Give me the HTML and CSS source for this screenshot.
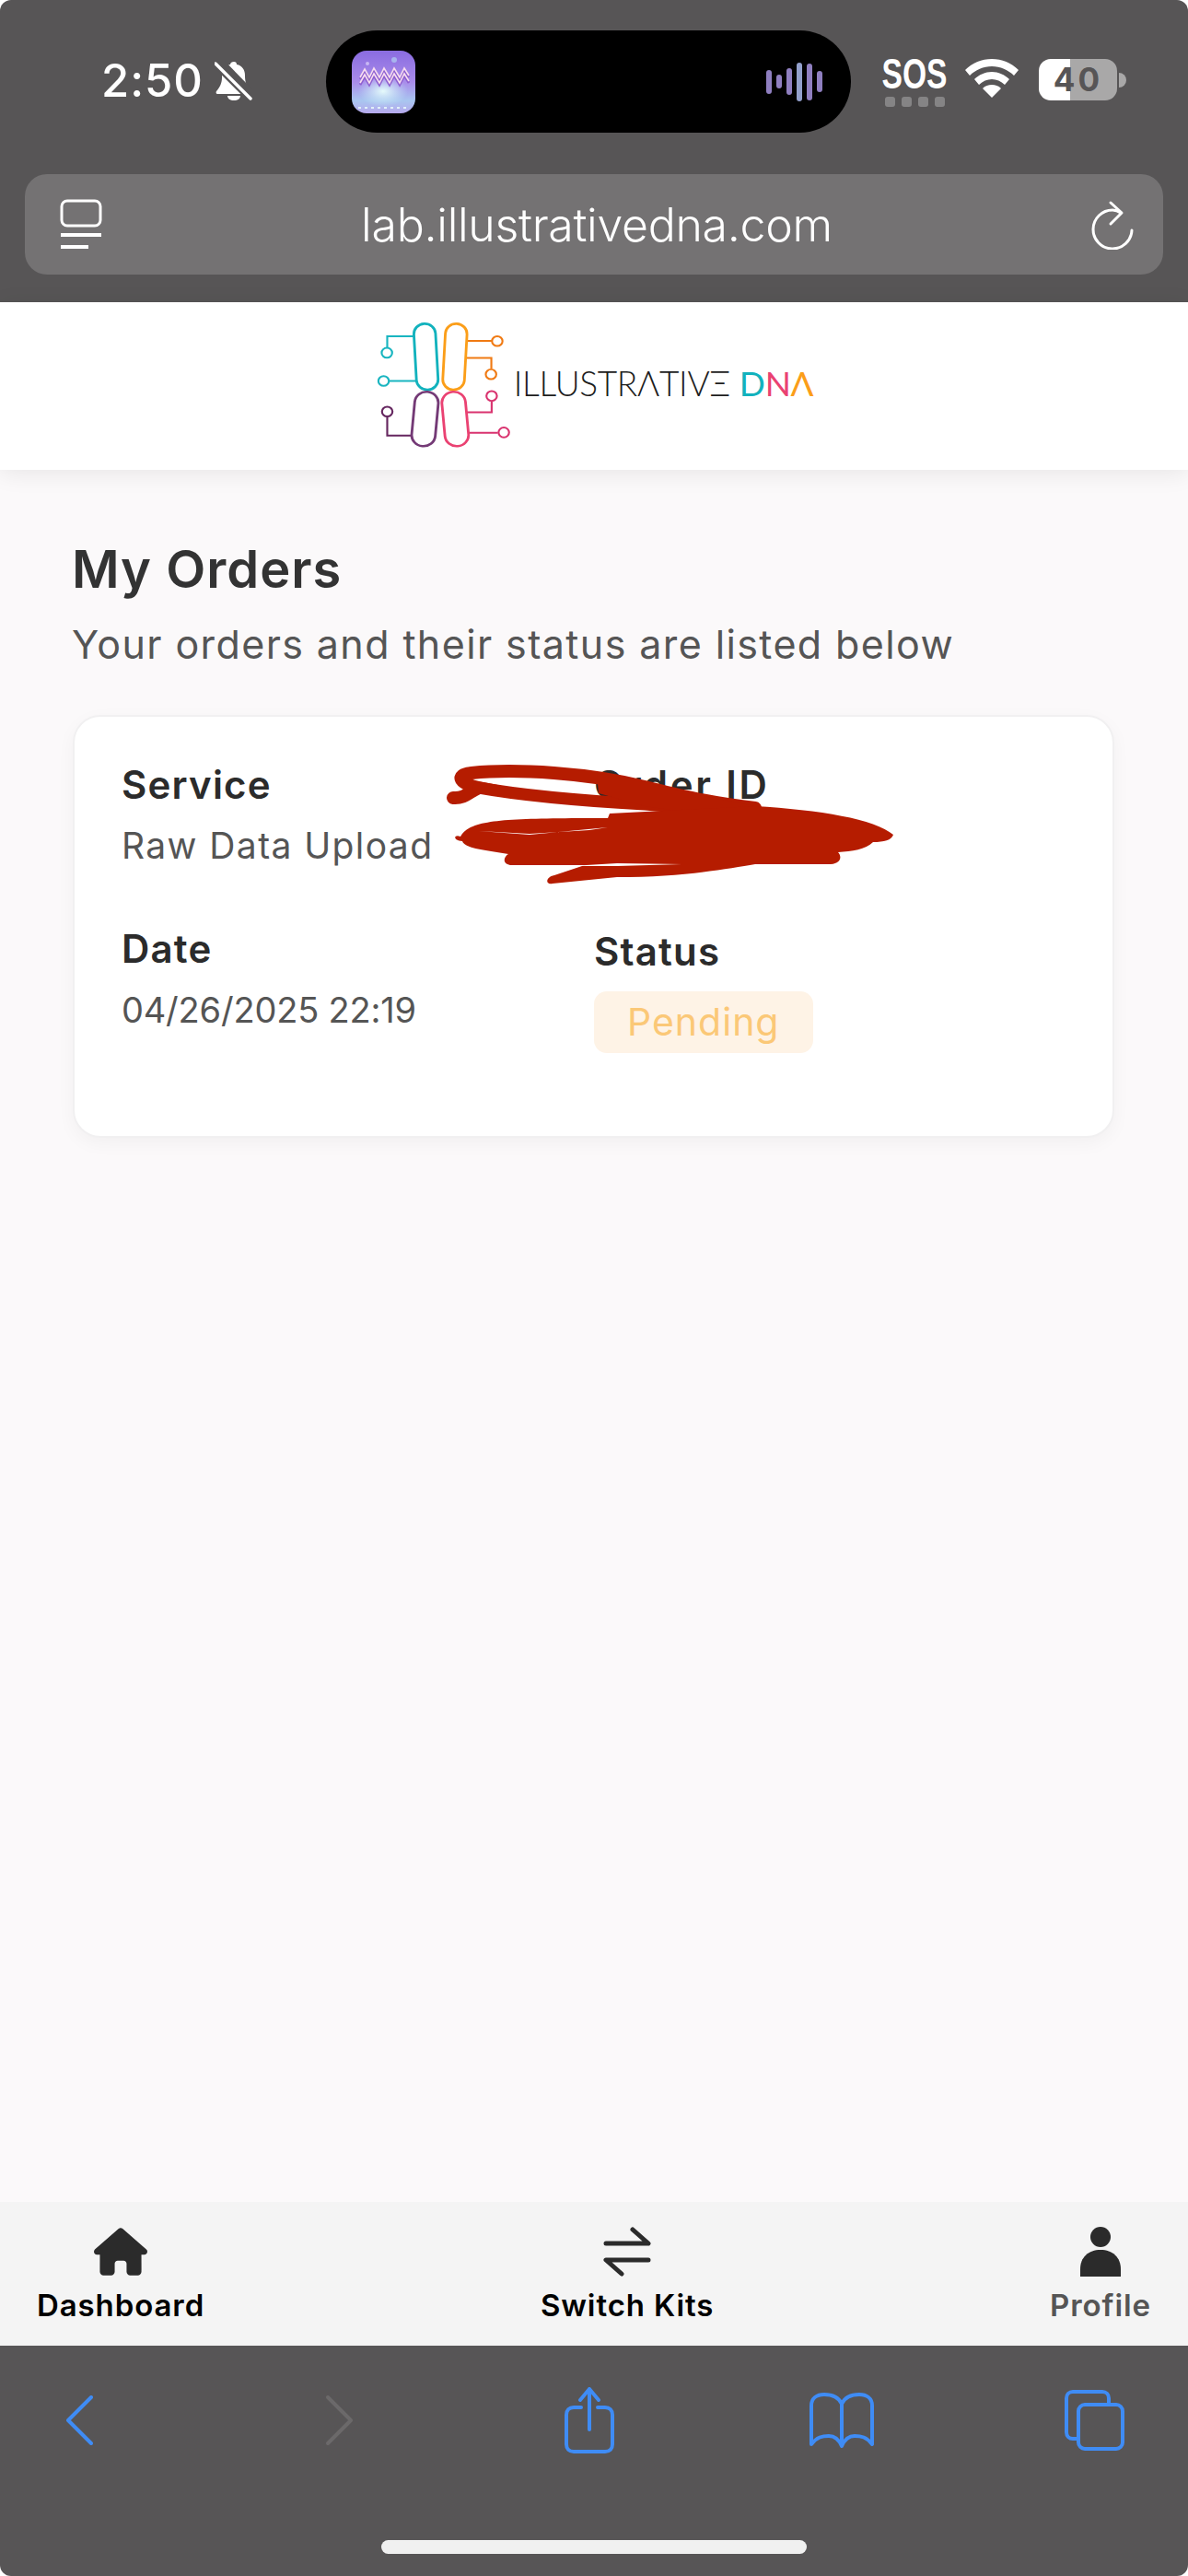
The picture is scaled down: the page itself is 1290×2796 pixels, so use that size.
FILE: index.html
```html
<!DOCTYPE html>
<html lang="en">
<head>
    <meta charset="UTF-8">
    <meta name="viewport" content="width=device-width, initial-scale=1.0">
    <title>My Orders</title>
    <link rel="stylesheet" href="styles.css">
</head>
<body>
<div class="phone">
    <div class="top-chrome">
        <div class="status-bar">
            <div class="status-left">
                <span class="time">2:50</span>
                <svg class="bell" viewBox="0 0 41 44">
                    <path d="M21 1c2 0 3 1 3 3 6 1 9 6 9 12 0 6 1 11 6 17 1 2 0 3-2 3H4c-2 0-3-1-2-3 4-5 6-9 6-15V16c0-6 4-11 9-12 0-2 2-3 4-3z" fill="#fff"/>
                    <path d="M14 38h14c0 3-3 5-7 5s-7-2-7-5z" fill="#fff"/>
                    <path d="M6 0l36 37" stroke="#575556" stroke-width="7"/>
                    <path d="M1 3l38 38" stroke="#575556" stroke-width="8"/>
                    <path d="M1 3l38 38" stroke="#fff" stroke-width="3.5" stroke-linecap="round"/>
                </svg>
            </div>
            <div class="island">
                <svg class="app-icon" viewBox="0 0 69 68">
                    <defs>
                        <linearGradient id="appGrad" x1="0" y1="0" x2="0" y2="1">
                            <stop offset="0" stop-color="#8a6ce0"/>
                            <stop offset="0.5" stop-color="#a98cea"/>
                            <stop offset="0.8" stop-color="#a9c6f0"/>
                            <stop offset="1" stop-color="#b6a8ec"/>
                        </linearGradient>
                        <radialGradient id="appGlow" cx="0.5" cy="0.5" r="0.5">
                            <stop offset="0" stop-color="#e6fbfb"/>
                            <stop offset="1" stop-color="#c8f0f8" stop-opacity="0"/>
                        </radialGradient>
                    </defs>
                    <rect width="69" height="68" rx="16" fill="url(#appGrad)"/>
                    <ellipse cx="34" cy="44" rx="27" ry="17" fill="url(#appGlow)"/>
                    <path d="M9 31l5-9 5 9 5-10 6 10 5-10 6 10 5-10 6 10 5-10 5 8M9 37l5-9 5 9 5-10 6 10 5-10 6 10 5-10 6 10 5-10 5 8" fill="none" stroke="#8d5fd0" stroke-width="2.6"/>
                    <path d="M9 29l5-9 5 9 5-10 6 10 5-10 6 10 5-10 6 10 5-10 5 8M9 35l5-9 5 9 5-10 6 10 5-10 6 10 5-10 6 10 5-10 5 8" fill="none" stroke="#f6dcf0" stroke-width="1.6"/>
                    <circle cx="46" cy="10" r="3" fill="#a8b4ee"/>
                    <circle cx="17" cy="14" r="2" fill="#c8b8f4"/>
                    <path d="M7 62h55" stroke="#e0f0f8" stroke-width="2" stroke-dasharray="3 4"/>
                </svg>
                <div class="sound-bars">
                    <span class="bar bar-1"></span>
                    <span class="bar bar-2"></span>
                    <span class="bar bar-3"></span>
                    <span class="bar bar-4"></span>
                    <span class="bar bar-5"></span>
                    <span class="bar bar-6"></span>
                </div>
            </div>
            <div class="status-right">
                <div class="sos">
                    <span class="sos-text">SOS</span>
                    <div class="sos-dots"><i></i><i></i><i></i><i></i></div>
                </div>
                <svg class="wifi" viewBox="0 0 58 42">
                    <path d="M29 0c11 0 21 4 29 12l-5 6c-6-6-15-10-24-10S11 12 5 18L0 12C8 4 18 0 29 0z" fill="#fff"/>
                    <path d="M29 14c7 0 14 3 19 8l-5 6c-4-4-9-6-14-6s-10 2-14 6l-5-6c5-5 12-8 19-8z" fill="#fff"/>
                    <path d="M29 28c4 0 7 1 10 4L29 42 19 32c3-3 6-4 10-4z" fill="#fff"/>
                </svg>
                <div class="battery">
                    <div class="battery-body"><span>40</span></div>
                    <div class="battery-nub"></div>
                </div>
            </div>
        </div>
        <div class="url-bar">
            <svg class="url-icon" viewBox="0 0 46 55">
                <rect x="2" y="2" width="42" height="27" rx="6" fill="none" stroke="#fff" stroke-width="3"/>
                <path d="M1 39h44M1 52h30" stroke="#fff" stroke-width="4"/>
            </svg>
            <span class="url-text">lab.illustrativedna.com</span>
            <svg class="url-icon" viewBox="16 11 46 55" fill="none" stroke="#fff" stroke-width="3" stroke-linecap="round" stroke-linejoin="round">
                <path d="M48 26C45 24 42 23 39 23A21 21 0 1 0 60 45"/>
                <path d="M37 15L49 26L37 38"/>
            </svg>
        </div>
    </div>

    <div class="header">
        <div class="logo">
            <svg class="logo-mark" viewBox="130 85 415 412" preserveAspectRatio="none" fill="none">
                <g stroke-width="6">
                    <path d="M245 133H165V170M255 279H172" stroke="#19b5c0"/>
                    <circle cx="164" cy="187" r="16" stroke="#19b5c0"/>
                    <circle cx="154" cy="279" r="16" stroke="#19b5c0"/>
                    <path d="M410 148H483M405 204H482V238" stroke="#f07a13"/>
                    <circle cx="500" cy="149" r="16" stroke="#f07a13"/>
                    <circle cx="481" cy="257" r="16" stroke="#f07a13"/>
                    <path d="M408 381H483V346M415 448H502" stroke="#d9336f"/>
                    <circle cx="483" cy="328" r="16" stroke="#d9336f"/>
                    <circle cx="520" cy="447" r="16" stroke="#d9336f"/>
                    <path d="M238 457H165V396" stroke="#65265f"/>
                    <circle cx="165" cy="379" r="16" stroke="#65265f"/>
                </g>
                <g stroke-width="8">
                    <rect x="250" y="92" width="66" height="216" rx="33" transform="rotate(-3 283 200)" stroke="#12b2bd"/>
                    <rect x="338" y="92" width="66" height="216" rx="33" transform="rotate(3 371 200)" stroke="#fb9e19"/>
                    <rect x="244" y="314" width="72" height="178" rx="36" transform="rotate(5 280 403)" stroke="#743a76"/>
                    <rect x="336" y="314" width="72" height="178" rx="36" transform="rotate(-5 372 403)" stroke="#ea4272"/>
                </g>
            </svg>
            <div class="logo-text" aria-label="Illustrative DNA">
                <span>ILLUSTRΛTIVΞ</span>
                <span class="logo-dna"><b class="dna-d">D</b><b class="dna-n">N</b><b class="dna-a">Λ</b></span>
            </div>
        </div>
    </div>

    <div class="main">
        <h1>My Orders</h1>
        <p class="subtitle">Your orders and their status are listed below</p>
        <div class="order-card">
            <div class="order-grid">
                <div class="field">
                    <div class="field-label">Service</div>
                    <div class="field-value">Raw Data Upload</div>
                </div>
                <div class="field">
                    <div class="field-label field-label-wide">Order ID</div>
                </div>
                <div class="field">
                    <div class="field-label">Date</div>
                    <div class="field-value field-date">04/26/2025 22:19</div>
                </div>
                <div class="field field-status">
                    <div class="field-label">Status</div>
                    <span class="badge">Pending</span>
                </div>
            </div>
            <svg class="scribble" viewBox="0 0 520 170">
                <path d="M22 57C35 58 40 50 50 46C30 42 22 32 42 30C90 25 170 30 230 45C270 55 300 62 350 68" fill="none" stroke="#b51c00" stroke-width="14" stroke-linecap="round"/>
                <path d="M50 46C100 55 160 60 230 64C260 66 290 70 310 75" fill="none" stroke="#b51c00" stroke-width="13" stroke-linecap="round"/>
                <path d="M178 32H200L270 50L350 66L300 76L230 66L180 52Z" fill="#b51c00"/>
                <path d="M30 99C40 80 80 79 190 79L192 74L350 66C420 70 480 80 500 97C498 103 490 105 478 105C470 113 455 115 440 116C444 120 444 128 432 129H350C320 134 270 143 200 143L130 150C122 152 122 143 132 141L165 130H84C74 128 78 120 82 118C60 114 34 112 32 104C22 104 22 96 30 99Z" fill="#b51c00"/>
                <path d="M50 93L105 97L190 89L170 92L105 96Z" fill="#fff"/>
                <path d="M150 131L200 128L270 129L200 131Z" fill="#fff"/>
            </svg>
        </div>
    </div>

    <div class="bottom-nav">
        <a class="nav-item" href="#">
            <svg class="nav-icon" viewBox="0 0 576 512"><path d="M575.8 255.5c0 18-15 32.1-32 32.1h-32l.7 160.2c0 2.7-.2 5.4-.5 8.1V472c0 22.1-17.9 40-40 40H456c-1.1 0-2.2 0-3.3-.1c-1.4 .1-2.8 .1-4.2 .1H416 392c-22.1 0-40-17.9-40-40V448 384c0-17.7-14.3-32-32-32H256c-17.7 0-32 14.3-32 32v64 24c0 22.1-17.9 40-40 40H160 128.1c-1.5 0-3-.1-4.5-.2c-1.2 .1-2.4 .2-3.6 .2H104c-22.1 0-40-17.9-40-40V360c0-.9 0-1.9 .1-2.8V287.6H32c-18 0-32-14-32-32.1c0-9 3-17 10-24L266.4 8c7-7 15-8 22-8s15 2 21 7L564.8 231.5c8 7 12 15 11 24z" fill="#2b2b2b"/></svg>
            <span>Dashboard</span>
        </a>
        <a class="nav-item" href="#">
            <svg class="nav-icon" viewBox="0 0 54 54" fill="none" stroke="#2b2b2b" stroke-width="5" stroke-linecap="round" stroke-linejoin="round"><path d="M33 3L50 18H4M21 51L4 36H50"/></svg>
            <span>Switch Kits</span>
        </a>
        <a class="nav-item nav-item-muted" href="#">
            <svg class="nav-icon" viewBox="0 0 46 54"><circle cx="23" cy="11" r="11" fill="#2b2b2b"/><path d="M1 54V46C1 33 10 25 23 25s22 8 22 21v8z" fill="#2b2b2b"/></svg>
            <span>Profile</span>
        </a>
    </div>

    <div class="toolbar">
        <div class="tool-row">
            <svg class="tool tool-arrow" viewBox="0 0 29 54" fill="none" stroke="#3f8cf5" stroke-width="4" stroke-linecap="round" stroke-linejoin="round"><path d="M27 2L2 27L27 52"/></svg>
            <svg class="tool tool-arrow" viewBox="0 0 29 54" fill="none" stroke="#6b696a" stroke-width="4" stroke-linecap="round" stroke-linejoin="round"><path d="M2 2L27 27L2 52"/></svg>
            <svg class="tool tool-share" viewBox="0 0 54 72" fill="none" stroke="#3f8cf5" stroke-width="4" stroke-linecap="round" stroke-linejoin="round"><path d="M18 22H10C5 22 2 25 2 30V62C2 67 5 70 10 70H44C49 70 52 67 52 62V30C52 25 49 22 44 22H36"/><path d="M27 46V2M17 14L27 2L37 14"/></svg>
            <svg class="tool tool-book" viewBox="0 0 70 60" fill="none" stroke="#3f8cf5" stroke-width="4" stroke-linejoin="round"><path d="M35 12C31 4 24 2 16 2C8 2 2 6 2 14V56C8 48 14 47 21 47C28 47 32 51 35 58C38 51 42 47 49 47C56 47 62 48 68 56V14C68 6 62 2 54 2C46 2 39 4 35 12ZM35 12V58"/></svg>
            <svg class="tool tool-tabs" viewBox="0 0 65 66" fill="none" stroke="#3f8cf5" stroke-width="4" stroke-linejoin="round"><path d="M14 53H9C5 53 2 50 2 46V9C2 5 5 2 9 2H41C45 2 48 5 48 9V16"/><rect x="15" y="16" width="48" height="48" rx="7"/></svg>
        </div>
        <div class="home-indicator"></div>
    </div>
</div>
</body>
</html>
```

FILE: styles.css
```css
html, body {
    margin: 0;
    background: #ffffff;
}

body {
    font-family: Inter, "Open Sans", sans-serif;
}

.phone {
    width: 1290px;
    height: 2796px;
    display: flex;
    flex-direction: column;
    border-radius: 12px;
    overflow: hidden;
    background: #fbf9fa;
}

/* ios + safari chrome */
.top-chrome {
    background: #575556;
    height: 328px;
    box-sizing: border-box;
    padding-top: 33px;
}

.status-bar {
    display: flex;
    align-items: flex-start;
    height: 111px;
}

.status-left {
    width: 354px;
    box-sizing: border-box;
    padding: 33px 0 0 110px;
    display: flex;
    align-items: center;
    gap: 12px;
}

.time {
    color: #fff;
    font-size: 49px;
    font-weight: 500;
    line-height: 44px;
    letter-spacing: 1px;
}

.bell {
    width: 41px;
    height: 44px;
}

.island {
    width: 570px;
    height: 111px;
    background: #000;
    border-radius: 56px;
    display: flex;
    align-items: center;
    justify-content: space-between;
    padding: 0 31px 0 28px;
    box-sizing: border-box;
}

.app-icon {
    width: 69px;
    height: 68px;
}

.sound-bars {
    display: flex;
    align-items: center;
    gap: 5px;
}

.bar {
    width: 6px;
    background: #8f7fc0;
    border-radius: 3px;
}

.bar-1 { height: 26px; }
.bar-2 { height: 15px; }
.bar-3 { height: 29px; }
.bar-4 { height: 42px; background: #93a0cc; }
.bar-5 { height: 40px; }
.bar-6 { height: 23px; }

.status-right {
    display: flex;
    align-items: flex-start;
    padding: 31px 0 0 34px;
}

.sos {
    width: 70px;
    margin-right: 20px;
}

.sos-text {
    display: block;
    width: 100px;
    margin-left: -15px;
    color: #fff;
    font-family: "Liberation Sans", sans-serif;
    font-size: 46px;
    font-weight: 700;
    line-height: 33px;
    text-align: center;
    transform: scaleX(0.73);
}

.sos-dots {
    display: flex;
    justify-content: space-between;
    padding: 8px 2px 0 3px;
}

.sos-dots i {
    width: 11px;
    height: 11px;
    border-radius: 3px;
    background: #858485;
}

.wifi {
    width: 58px;
    height: 42px;
    margin-right: 22px;
}

.battery {
    display: flex;
    align-items: center;
}

.battery-body {
    width: 85px;
    height: 45px;
    border-radius: 13px;
    background: linear-gradient(90deg, #fff 0 40%, #a9a8a8 40% 100%);
    color: #575556;
    font-family: Inter, sans-serif;
    font-size: 35px;
    font-weight: 700;
    line-height: 45px;
    text-align: center;
    letter-spacing: 3px;
}

.battery-nub {
    width: 8px;
    height: 16px;
    background: #a9a8a8;
    border-radius: 0 8px 8px 0;
    margin-left: 2px;
}

.url-bar {
    margin: 45px 27px 0;
    height: 109px;
    background: #747273;
    border-radius: 24px;
    display: flex;
    align-items: center;
    justify-content: space-between;
    padding: 0 32px 0 38px;
}

.url-icon {
    width: 46px;
    height: 55px;
}

.url-text {
    color: #fff;
    font-family: Inter, sans-serif;
    font-size: 50px;
    font-weight: 300;
    letter-spacing: -0.3px;
}

/* site header */
.header {
    height: 182px;
    background: #fff;
    box-shadow: 0 4px 24px rgba(0, 0, 0, 0.08);
    display: flex;
    justify-content: center;
    align-items: center;
    position: relative;
}

.logo {
    display: flex;
    align-items: center;
    margin-left: 1px;
    gap: 2px;
}

.logo-mark {
    width: 148px;
    height: 137px;
    margin-top: -4px;
}

.logo-text {
    display: flex;
    gap: 10px;
    font-family: Lato, sans-serif;
    font-size: 37px;
    font-weight: 300;
    color: #1d1d1d;
    line-height: 40px;
    margin-top: -6px;
    letter-spacing: -0.3px;
}

.logo-dna b {
    font-weight: 400;
}

.dna-d { color: #12b2bd; }
.dna-n { color: #ea4272; }
.dna-a { color: #fb9e19; }

/* content */
.main {
    flex: 1;
    padding: 0 80px 0 79px;
}

.main h1 {
    margin: 76px 0 0 -1px;
    font-size: 56px;
    line-height: 64px;
    font-weight: 600;
    color: #333333;
    letter-spacing: 1px;
}

.subtitle {
    margin: 23px 0 0 -1px;
    font-size: 43px;
    line-height: 52px;
    color: #555555;
    letter-spacing: 1.4px;
}

.order-card {
    margin-top: 51px;
    height: 459px;
    box-sizing: border-box;
    background: #fff;
    border: 2px solid #f1f0f1;
    border-radius: 30px;
    box-shadow: 0 6px 20px rgba(0, 0, 0, 0.04);
    padding: 49px 51px;
    position: relative;
}

.order-grid {
    display: grid;
    grid-template-columns: 513px 1fr;
    row-gap: 50px;
}

.field {
    min-height: 128px;
}

.field-label {
    font-size: 42px;
    line-height: 50px;
    font-weight: 600;
    color: #2b2b2b;
    letter-spacing: 1.2px;
}

.field-label-wide {
    letter-spacing: 2.8px;
}

.field-value {
    margin-top: 17px;
    font-size: 39px;
    line-height: 48px;
    color: #555555;
    letter-spacing: 1.4px;
}

.field-date {
    font-size: 38px;
    letter-spacing: -0.2px;
}

.field-status {
    padding-top: 3px;
}

.badge {
    display: inline-block;
    margin-top: 18px;
    padding: 0 36px;
    height: 67px;
    line-height: 67px;
    background: #fef3e6;
    color: #fbc877;
    border-radius: 14px;
    font-size: 41px;
    letter-spacing: 1px;
}

.scribble {
    position: absolute;
    left: 389px;
    top: 31px;
    width: 520px;
    height: 170px;
}

/* bottom nav */
.bottom-nav {
    height: 156px;
    box-sizing: border-box;
    background: #f4f4f4;
    display: flex;
    justify-content: space-between;
    padding: 27px 40px 0 40px;
}

.nav-item {
    display: flex;
    flex-direction: column;
    align-items: center;
    text-decoration: none;
    color: #000;
    font-size: 33px;
    font-weight: 600;
    letter-spacing: 0.9px;
}

.nav-item span {
    line-height: 40px;
    margin-top: 11px;
}

.nav-item-muted {
    color: #555555;
}

.nav-icon {
    height: 54px;
    max-width: 58px;
}

/* safari toolbar */
.toolbar {
    height: 250px;
    background: #575556;
    position: relative;
}

.tool-row {
    display: grid;
    grid-template-columns: 282px 259px 266px 277px auto;
    padding: 45px 0 0 72px;
    align-items: center;
    justify-items: start;
}

.tool-arrow {
    width: 29px;
    height: 54px;
}

.tool-share {
    width: 54px;
    height: 72px;
}

.tool-book {
    width: 70px;
    height: 60px;
}

.tool-tabs {
    width: 65px;
    height: 66px;
}

.home-indicator {
    position: absolute;
    left: 414px;
    bottom: 24px;
    width: 462px;
    height: 15px;
    background: #f0f0f0;
    border-radius: 8px;
}
```
